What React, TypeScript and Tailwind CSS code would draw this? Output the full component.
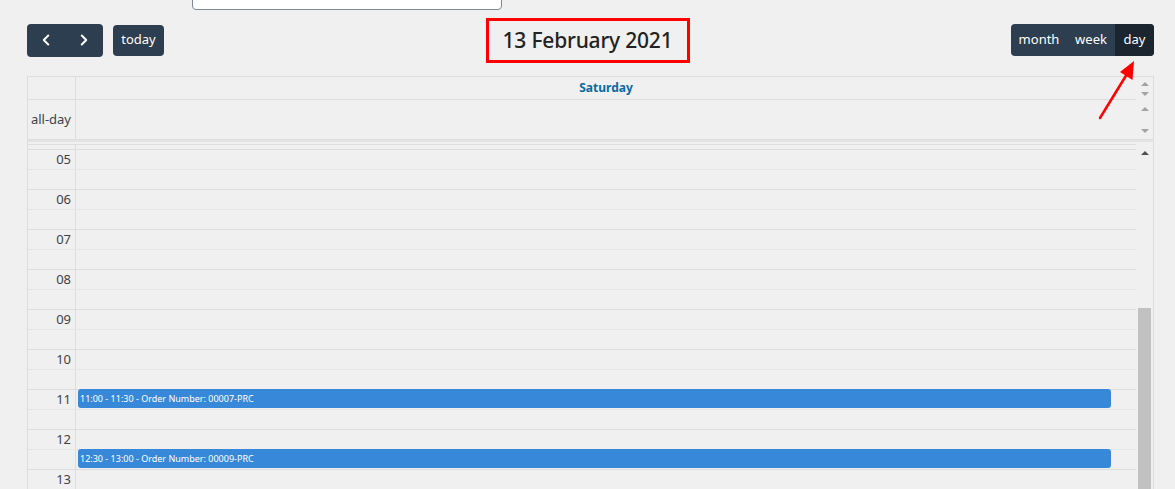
import { ChevronLeft, ChevronRight } from "lucide-react";

const hours = ["05", "06", "07", "08", "09", "10", "11", "12", "13"];

// events keyed by hour + half (0 = :00, 1 = :30)
const events: Record<string, string> = {
  "11-0": "11:00 - 11:30 - Order Number: 00007-PRC",
  "12-1": "12:30 - 13:00 - Order Number: 00009-PRC",
};

function Tri({ dir, color }: { dir: "up" | "down"; color: string }) {
  return (
    <svg width="8" height="4" viewBox="0 0 8 4">
      <path d={dir === "up" ? "M4 0 L8 4 L0 4 Z" : "M0 0 L8 0 L4 4 Z"} fill={color} />
    </svg>
  );
}

function Slot({ hour, half }: { hour: string; half: number }) {
  const ev = events[`${hour}-${half}`];
  return (
    <div
      className={`flex h-[20px] border-t border-[#dddddd] ${half === 0 ? "border-solid" : "border-dotted"}`}
    >
      <div className="w-[48px] shrink-0 border-r border-solid border-[#dddddd] pr-[4px] text-right text-[13px] leading-[19px] text-[#3c434a]">
        {half === 0 ? hour : ""}
      </div>
      <div className="relative flex-1">
        {ev && (
          <div className="absolute left-[2px] right-[25px] top-[-1px] z-10 h-[19px] rounded-[3px] bg-[#3788d8] pl-[2px] text-[9px] leading-[20px] text-white">
            {ev}
          </div>
        )}
      </div>
    </div>
  );
}

export default function App() {
  return (
    <div className="relative h-[489px] w-[1175px] overflow-hidden bg-[#f0f0f0] font-['Noto_Sans',sans-serif]">
      {/* search input (cut off at top) */}
      <div className="-mt-[22px] ml-[192px] h-[32px] w-[310px] rounded-[4px] border border-[#7e8993] bg-white" />

      {/* Toolbar */}
      <div className="ml-[27px] mt-[8px] flex h-[44px] w-[1127px] items-center justify-between">
        <div className="flex items-center gap-[10px]">
          <div className="flex h-[33px] w-[76px] overflow-hidden rounded-[4px] bg-[#2c3e50] text-white">
            <button className="flex w-[38px] items-center justify-center">
              <ChevronLeft size={18} strokeWidth={2.6} />
            </button>
            <button className="flex w-[38px] items-center justify-center">
              <ChevronRight size={18} strokeWidth={2.6} />
            </button>
          </div>
          <button className="h-[31px] w-[51px] rounded-[4px] bg-[#2c3e50] text-[13px] text-white">today</button>
        </div>

        <div className="flex h-[45px] w-[204px] items-center justify-center border-[3px] border-[#ff0000]">
          <h2 className="text-[21px] font-medium leading-none tracking-[-0.2px] text-[#222222]">13 February 2021</h2>
        </div>

        <div className="flex h-[32px] w-[143px] overflow-hidden rounded-[4px] bg-[#2c3e50] text-[13px] text-white">
          <button className="w-[56px]">month</button>
          <button className="w-[48px]">week</button>
          <button className="w-[39px] bg-[#1a252f]">day</button>
        </div>
      </div>

      {/* Calendar */}
      <div className="ml-[27px] mt-[14px] w-[1127px] border-x border-t border-[#dddddd]">
        {/* header row */}
        <div className="flex h-[23px]">
          <div className="flex flex-1 border-b border-[#dddddd]">
            <div className="w-[48px] shrink-0 border-r border-[#dddddd]" />
            <div className="flex-1 text-center text-[12px] font-bold leading-[22px] text-[#0a6aa1]">Saturday</div>
          </div>
          <div className="flex w-[17px] flex-col items-center justify-between pb-[4px] pt-[5px]">
            <Tri dir="up" color="#a3a3a3" />
            <Tri dir="down" color="#a3a3a3" />
          </div>
        </div>

        {/* all-day row */}
        <div className="flex h-[39px]">
          <div className="flex flex-1">
            <div className="flex w-[48px] shrink-0 items-center justify-end border-r border-[#dddddd] pr-[4px] text-[13px] text-[#3c434a]">
              all-day
            </div>
            <div className="flex-1" />
          </div>
          <div className="flex w-[17px] flex-col items-center justify-between pb-[6px] pt-[7px]">
            <Tri dir="up" color="#a3a3a3" />
            <Tri dir="down" color="#a3a3a3" />
          </div>
        </div>

        {/* divider */}
        <div className="h-[3px] border-t border-[#dddddd] bg-[#e4e4e4]" />
        <div className="h-[2px]" />

        {/* time grid */}
        <div className="flex h-[345px] overflow-hidden">
          <div className="flex-1 border-t border-[#dddddd]">
            <div className="flex h-[4px]">
              <div className="w-[48px] shrink-0 border-r border-[#dddddd]" />
            </div>
            {hours.map((h) => (
              <div key={h}>
                <Slot hour={h} half={0} />
                <Slot hour={h} half={1} />
              </div>
            ))}
          </div>
          <div className="flex w-[17px] flex-col items-center">
            <div className="flex h-[17px] items-center">
              <Tri dir="up" color="#505050" />
            </div>
            <div className="mt-[147px] w-[13px] flex-1 bg-[#c1c1c1]" />
          </div>
        </div>
      </div>

      {/* annotation arrow */}
      <svg className="pointer-events-none absolute left-0 top-0" width="1175" height="489">
        <line x1="1100" y1="118" x2="1127" y2="74" stroke="#ff0000" strokeWidth="2.5" strokeLinecap="round" />
        <path d="M1134 61 L1132.5 80 L1120 72 Z" fill="#ff0000" />
      </svg>
    </div>
  );
}
